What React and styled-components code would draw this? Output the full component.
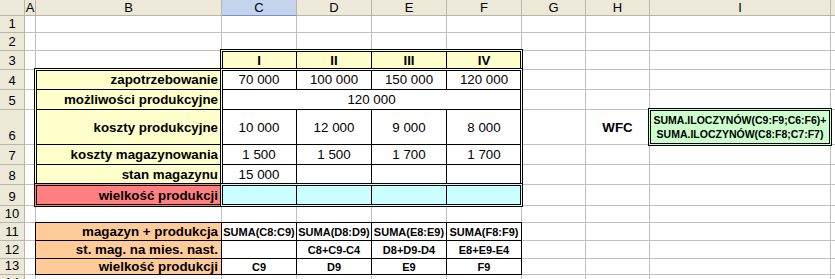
import React from "react";
import styled, { createGlobalStyle, css } from "styled-components";

const GlobalStyle = createGlobalStyle`
  *, *::before, *::after { box-sizing: border-box; }
  html, body { margin: 0; padding: 0; background: #fff; overflow: hidden; }
  body { font-family: "Liberation Sans", Arial, sans-serif; color: #000; }
`;

const COLS = ["A", "B", "C", "D", "E", "F", "G", "H", "I", ""];
const COL_W = [25, 11, 186, 75, 75, 75, 75, 64, 64, 181, 120];
const ROW_H = [16, 17, 18, 19, 20, 20, 35, 20, 20, 21, 17, 18, 18, 16, 17];
const ROWS = 14;

// [kind, text, span]
const DATA = {
  C3: ["head", "I"], D3: ["head", "II"], E3: ["head", "III"], F3: ["head", "IV"],
  B4: ["label", "zapotrzebowanie"], C4: ["num", "70 000"], D4: ["num", "100 000"], E4: ["num", "150 000"], F4: ["num", "120 000"],
  B5: ["label", "możliwości produkcyjne"], C5: ["num", "120 000", 4],
  B6: ["label", "koszty produkcyjne"], C6: ["num", "10 000"], D6: ["num", "12 000"], E6: ["num", "9 000"], F6: ["num", "8 000"],
  B7: ["label", "koszty magazynowania"], C7: ["num", "1 500"], D7: ["num", "1 500"], E7: ["num", "1 700"], F7: ["num", "1 700"],
  B8: ["label", "stan magazynu"], C8: ["num", "15 000"], D8: ["num", ""], E8: ["num", ""], F8: ["num", ""],
  B9: ["red", "wielkość produkcji"], C9: ["cyan", ""], D9: ["cyan", ""], E9: ["cyan", ""], F9: ["cyan", ""],
  H6: ["note", "WFC"],
  B11: ["orange", "magazyn + produkcja"], C11: ["code", "SUMA(C8:C9)"], D11: ["code", "SUMA(D8:D9)"], E11: ["code", "SUMA(E8:E9)"], F11: ["code", "SUMA(F8:F9)"],
  B12: ["orange", "st. mag. na mies. nast."], C12: ["code", ""], D12: ["code", "C8+C9-C4"], E12: ["code", "D8+D9-D4"], F12: ["code", "E8+E9-E4"],
  B13: ["orange", "wielkość produkcji"], C13: ["code", "C9"], D13: ["code", "D9"], E13: ["code", "E9"], F13: ["code", "F9"],
};

const MERGED = new Set(["D5", "E5", "F5"]);

// double-lined boxes drawn over the cells
const FRAMES = [
  { c: 3, r: 3, w: 4, h: 1, gap: "#ffffcc" },
  { c: 2, r: 4, w: 1, h: 5, gap: "#ffffcc" },
  { c: 3, r: 4, w: 4, h: 5, gap: "#ffffff" },
  { c: 2, r: 9, w: 1, h: 1, gap: "#ff8080" },
  { c: 3, r: 9, w: 4, h: 1, gap: "#ccffff" },
  { c: 2, r: 11, w: 5, h: 3, thin: true },
];

const Sheet = styled.div`
  display: grid;
  grid-template-columns: ${COL_W.map((w) => w + "px").join(" ")};
  grid-template-rows: ${ROW_H.map((h) => h + "px").join(" ")};
  width: max-content;
  font-family: "Liberation Sans", Arial, sans-serif;
`;

const headBase = css`
  display: flex;
  justify-content: center;
  background: #ece9d8;
  border-right: 1px solid #b9b6a8;
  border-bottom: 1px solid #b9b6a8;
  font-size: 13px;
  color: #000;
`;

const Corner = styled.div`
  ${headBase};
  grid-column: 1;
  grid-row: 1;
`;

const ColHead = styled.div`
  ${headBase};
  grid-row: 1;
  grid-column: ${(p) => p.$c + 1};
  align-items: center;
  ${(p) =>
    p.$active &&
    css`
      background: #c4d3ee;
      border-bottom-color: #7593c9;
    `}
`;

const RowHead = styled.div`
  ${headBase};
  grid-column: 1;
  grid-row: ${(p) => p.$r + 1};
  align-items: flex-end;
  padding-bottom: 1px;
`;

const kinds = {
  blank: css``,
  head: css`
    background: #ffffcc;
    font-weight: bold;
    border-color: #000;
  `,
  label: css`
    background: #ffffcc;
    font-weight: bold;
    justify-content: flex-end;
    border-color: #000;
  `,
  red: css`
    background: #ff8080;
    font-weight: bold;
    justify-content: flex-end;
    border-color: #000;
  `,
  orange: css`
    background: #ffcc99;
    font-weight: bold;
    justify-content: flex-end;
    border-color: #000;
  `,
  num: css`
    border-color: #000;
  `,
  cyan: css`
    background: #ccffff;
    border-color: #000;
  `,
  code: css`
    font-weight: bold;
    font-size: 11px;
    border-color: #000;
  `,
  note: css`
    font-weight: bold;
  `,
};

const Cell = styled.div`
  grid-column: ${(p) => p.$c + 1} / span ${(p) => p.$span || 1};
  grid-row: ${(p) => p.$r + 1};
  display: flex;
  align-items: center;
  justify-content: center;
  padding: 0 3px;
  background: #fff;
  border-right: 1px solid #c0c0c0;
  border-bottom: 1px solid #c0c0c0;
  font-size: 13.33px;
  white-space: nowrap;
  overflow: hidden;
  ${(p) => kinds[p.$kind || "blank"]}
`;

const Frame = styled.div`
  grid-column: ${(p) => p.$c + 1} / span ${(p) => p.$w};
  grid-row: ${(p) => p.$r + 1} / span ${(p) => p.$h};
  border: 1px solid #000;
  ${(p) =>
    p.$thin
      ? css`
          margin: -1px 0 0 -1px;
        `
      : css`
          margin: -2px -1px -1px -2px;
          box-shadow: inset 0 0 0 1px ${p.$gap}, inset 0 0 0 2px #000;
        `}
`;

const FormulaBox = styled.div`
  grid-column: 10;
  grid-row: 7;
  margin: -2px -1px -1px -2px;
  border: 3px double #000;
  background: #ccffcc;
  display: flex;
  align-items: center;
  justify-content: center;
  text-align: center;
  font-weight: bold;
  font-size: 10.5px;
  line-height: 14px;
  white-space: nowrap;
`;

export default function App() {
  const cells = [];
  for (let r = 1; r <= ROWS; r++) {
    cells.push(<RowHead key={"h" + r} $r={r}>{r}</RowHead>);
    COLS.forEach((col, i) => {
      const id = col + r;
      if (MERGED.has(id)) return;
      const d = col ? DATA[id] : null;
      cells.push(
        <Cell key={"c" + i + "-" + r} $c={i + 1} $r={r} $kind={d ? d[0] : "blank"} $span={d ? d[2] : 1}>
          {d ? d[1] : null}
        </Cell>
      );
    });
  }

  return (
    <>
      <GlobalStyle />
      <Sheet>
        <Corner />
        {COLS.map((col, i) => (
          <ColHead key={"k" + i} $c={i + 1} $active={col === "C"}>
            {col}
          </ColHead>
        ))}
        {cells}
        {FRAMES.map((f, i) => (
          <Frame key={"f" + i} $c={f.c} $r={f.r} $w={f.w} $h={f.h} $gap={f.gap} $thin={f.thin} />
        ))}
        <FormulaBox>
          SUMA.ILOCZYNÓW(C9:F9;C6:F6)+
          <br />
          SUMA.ILOCZYNÓW(C8:F8;C7:F7)
        </FormulaBox>
      </Sheet>
    </>
  );
}
